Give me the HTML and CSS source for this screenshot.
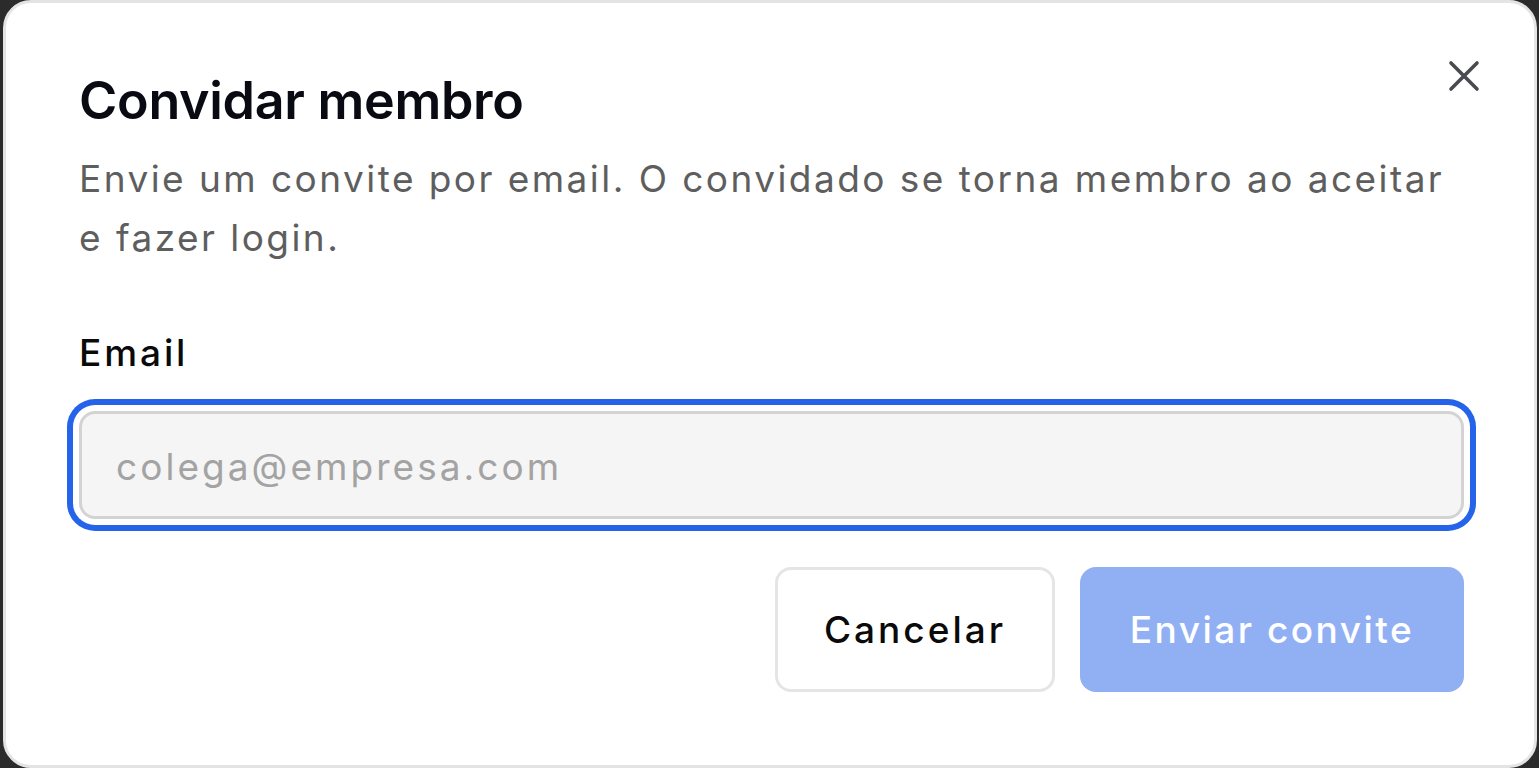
FILE: index.html
```html
<!DOCTYPE html>
<html lang="pt">
<head>
<meta charset="utf-8">
<title>Convidar membro</title>
<link rel="stylesheet" href="styles.css">
</head>
<body>
<div class="dialog">
  <button class="close" aria-label="Fechar">
    <svg viewBox="0 0 40 40" width="40" height="40"><path d="M7 7 L33 33 M33 7 L7 33" fill="none" stroke="currentColor" stroke-width="3.6" stroke-linecap="round"/></svg>
  </button>
  <h1 class="title">Convidar membro</h1>
  <p class="desc">Envie um convite por email. O convidado se torna membro ao aceitar e fazer login.</p>
  <label class="label" for="email">Email</label>
  <div class="field"><input id="email" class="input" type="email" placeholder="colega@empresa.com"></div>
  <div class="actions">
    <button class="btn btn-cancel">Cancelar</button>
    <button class="btn btn-primary">Enviar convite</button>
  </div>
</div>
</body>
</html>
```

FILE: styles.css
```css
* { box-sizing: border-box; }
html, body { margin: 0; padding: 0; }
body {
  background: #2b2b2b;
  font-family: Inter, "Noto Sans", sans-serif;
  height: 768px;
  overflow: hidden;
}
.dialog {
  position: relative;
  margin-left: 3px;
  width: 1534px;
  height: 768px;
  background: #fff;
  border: 3px solid #e4e4e4;
  border-radius: 28px;
  padding: 67px 70px 0 73px;
  display: flex;
  flex-direction: column;
}
.close {
  position: absolute;
  left: 1438px;
  top: 53px;
  width: 40px;
  height: 40px;
  padding: 0;
  border: 0;
  background: none;
  color: #4a4b50;
}
.close svg { display: block; }
.title {
  margin: 0;
  font-size: 52px;
  line-height: 62px;
  font-weight: 600;
  color: #0a0a12;
  letter-spacing: -0.3px;
}
.desc {
  margin: 18px 0 0;
  font-size: 37px;
  line-height: 58.5px;
  color: #5e5e5e;
  letter-spacing: 2.45px;
}
.label {
  margin-top: 59px;
  font-size: 37px;
  line-height: 54px;
  font-weight: 500;
  color: #0a0a0a;
  letter-spacing: 2.9px;
}
.field { margin-top: 31px; }
.input {
  display: block;
  width: 100%;
  height: 108px;
  border: 3px solid #d3d3d3;
  border-radius: 16px;
  background: #f5f5f5;
  padding: 2px 34px 0;
  font-family: inherit;
  font-size: 37px;
  letter-spacing: 3.05px;
  color: #111;
  outline: none;
  box-shadow: 0 0 0 6px #fff, 0 0 0 12px #2563eb;
}
.input::placeholder { color: #a3a3a3; }
.actions {
  margin-top: 48px;
  display: flex;
  justify-content: flex-end;
  gap: 25px;
}
.btn {
  height: 125px;
  border-radius: 16px;
  font-family: inherit;
  font-size: 37px;
  font-weight: 500;
  padding: 0 30px;
}
.btn-cancel {
  width: 280px;
  background: #fff;
  border: 3px solid #e5e5e5;
  color: #0a0a0a;
  letter-spacing: 3px;
}
.btn-primary {
  width: 384px;
  border: 0;
  background: #2563eb;
  opacity: 0.5;
  color: #fff;
  letter-spacing: 2.5px;
}
```
